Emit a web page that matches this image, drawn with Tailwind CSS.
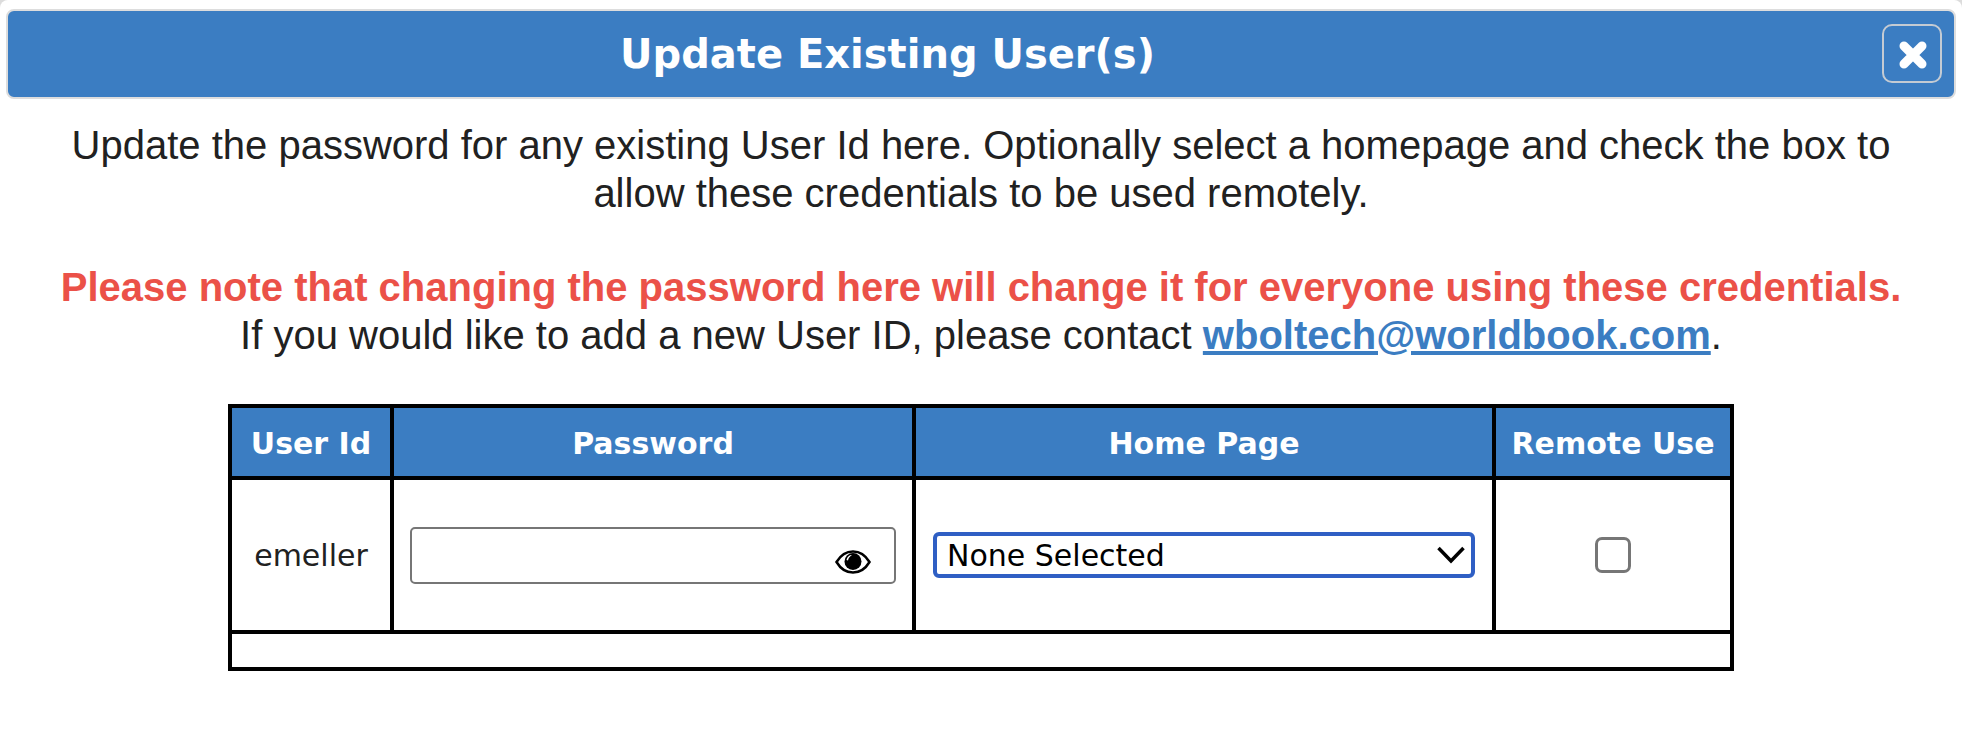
<!DOCTYPE html>
<html><head><meta charset="utf-8"><script src="https://cdn.jsdelivr.net/npm/@tailwindcss/browser@4"></script></head>
<body class="bg-[#dcdcdc]">
<div class="h-[740px] w-[1962px] overflow-hidden rounded-t-[8px] bg-white px-[6px] pt-[9px] font-['Liberation_Sans',sans-serif] text-[#212121]">
  <div class="relative flex h-[90px] w-[1950px] items-center justify-center rounded-[8px] border-2 border-[#dddddd] bg-[#3b7dc2]">
    <h1 class="mr-[187px] font-['DejaVu_Sans',sans-serif] text-[40px] font-bold text-white">Update Existing User(s)</h1>
    <button class="absolute right-[12px] top-[13px] flex h-[59px] w-[60px] items-center justify-center rounded-[10px] border-2 border-[#c4cbd3] pl-[2px] pt-[3px]">
      <svg width="30" height="30" viewBox="0 0 30 30"><path d="M6 6 24 24M24 6 6 24" stroke="white" stroke-width="9" stroke-linecap="round"/></svg>
    </button>
  </div>
  <div class="mt-[22px] text-center text-[40px] leading-[48px]">
    <p>Update the password for any existing User Id here. Optionally select a homepage and check the box to<br>allow these credentials to be used remotely.</p>
    <p class="mt-[46px] font-bold text-[#eb5148]">Please note that changing the password here will change it for everyone using these credentials.</p>
    <p>If you would like to add a new User ID, please contact <a class="font-bold text-[#3b7dc2] underline" href="#">wboltech@worldbook.com</a>.</p>
  </div>
  <table class="ml-[222px] mt-[45px] w-[1502px] table-fixed border-collapse border-4 border-black font-['DejaVu_Sans',sans-serif] text-[30px]">
    <colgroup><col class="w-[162px]"><col class="w-[522px]"><col class="w-[580px]"><col class="w-[238px]"></colgroup>
    <thead><tr class="h-[72px] bg-[#3b7dc2] text-white">
      <th class="border-4 border-black pt-[3px] font-bold">User Id</th>
      <th class="border-4 border-black pt-[3px] font-bold">Password</th>
      <th class="border-4 border-black pt-[3px] font-bold">Home Page</th>
      <th class="whitespace-nowrap border-4 border-black pt-[3px] font-bold">Remote Use</th>
    </tr></thead>
    <tbody>
      <tr class="h-[154px]">
        <td class="border-4 border-black text-center">emeller</td>
        <td class="border-4 border-black px-[16px]">
          <div class="relative h-[57px] rounded-[5px] border-2 border-[#767676]">
            <svg class="absolute right-[23px] top-[21px]" width="36" height="24" viewBox="0 0 36 24"><path d="M1.500 12C6 4.500 12 1.500 18 1.500S30 4.500 34.500 12C30 19.500 24 22.500 18 22.500S6 19.500 1.500 12Z" fill="white" stroke="black" stroke-width="2.500"/><circle cx="18" cy="11.500" r="8.500" fill="black"/><path d="M11.500 10C12 7 14 5 17 5C14.500 6.500 13.500 8 13 10.500Z" fill="white"/></svg>
          </div>
        </td>
        <td class="border-4 border-black px-[17px]">
          <div class="flex h-[46px] items-center justify-between rounded-[6px] border-4 border-[#2f5fc4] pl-[10px] pr-[6px] text-black">
            <span>None Selected</span>
            <svg width="28" height="18" viewBox="0 0 28 18"><path d="M1.500 2 14 15 26.500 2" fill="none" stroke="black" stroke-width="3.500"/></svg>
          </div>
        </td>
        <td class="border-4 border-black">
          <div class="mx-auto h-[36px] w-[36px] rounded-[7px] border-[3px] border-[#767676]"></div>
        </td>
      </tr>
      <tr class="h-[37px]"><td colspan="4" class="border-4 border-black"></td></tr>
    </tbody>
  </table>
</div>
</body></html>
